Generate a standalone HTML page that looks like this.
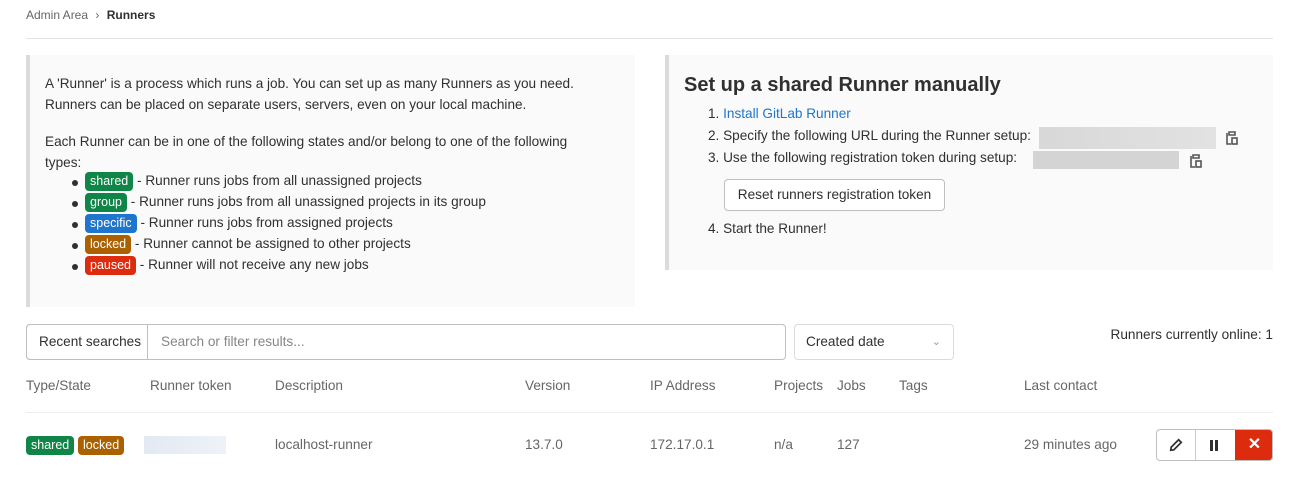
<!DOCTYPE html>
<html><head><style>
*{box-sizing:border-box;margin:0;padding:0}
body{width:1311px;height:492px;background:#fff;font-family:"Liberation Sans",sans-serif;font-size:13.6px;color:#303030;position:relative;overflow:hidden}
.a{position:absolute;white-space:nowrap}
.bd{display:inline-block;color:#fff;border-radius:4px;padding:0 5px;height:19px;line-height:19px;font-size:12.5px}
.g{background:#108548}.b{background:#1f75cb}.o{background:#ab6100}.r{background:#dd2b0e}
.panel{position:absolute;background:#fafafa;border-left:4px solid #dbdbdb}
.li{position:absolute;left:72px;white-space:nowrap}
.li:before{content:"";position:absolute;left:0;top:7px;width:6px;height:6px;border-radius:50%;background:#303030}
.li span.t{position:absolute;left:13px;top:-1px;white-space:nowrap}
.h{color:#666}
.bl{position:absolute;background:linear-gradient(90deg,#d8d8d8,#e2e2e2)}
</style></head><body>
<div class="a" style="left:26px;top:8px;font-size:12px;color:#666">Admin Area <span style="margin:0 4px">›</span> <b style="color:#303030;font-weight:600">Runners</b></div>
<div class="a" style="left:26px;top:38px;width:1247px;height:1px;background:#e5e5e5"></div>

<div class="panel" style="left:26px;top:55px;width:609px;height:252px"></div>
<div class="a" style="left:45px;top:73px;line-height:21px">A 'Runner' is a process which runs a job. You can set up as many Runners as you need.<br>Runners can be placed on separate users, servers, even on your local machine.</div>
<div class="a" style="left:45px;top:131px;line-height:21px">Each Runner can be in one of the following states and/or belong to one of the following<br>types:</div>
<div class="li" style="top:173px"><span class="t"><span class="bd g">shared</span> - Runner runs jobs from all unassigned projects</span></div>
<div class="li" style="top:194px"><span class="t"><span class="bd g">group</span> - Runner runs jobs from all unassigned projects in its group</span></div>
<div class="li" style="top:215px"><span class="t"><span class="bd b">specific</span> - Runner runs jobs from assigned projects</span></div>
<div class="li" style="top:236px"><span class="t"><span class="bd o">locked</span> - Runner cannot be assigned to other projects</span></div>
<div class="li" style="top:257px"><span class="t"><span class="bd r">paused</span> - Runner will not receive any new jobs</span></div>

<div class="panel" style="left:665px;top:55px;width:608px;height:215px"></div>
<div class="a" style="left:684px;top:74px;font-size:20px;font-weight:600">Set up a shared Runner manually</div>
<div class="a" style="left:708px;top:106px">1. <span style="color:#1f75cb">Install GitLab Runner</span></div>
<div class="a" style="left:708px;top:128px">2. Specify the following URL during the Runner setup:</div>
<div class="bl" style="left:1039px;top:127px;width:177px;height:22px"></div>
<svg class="a" style="left:1226px;top:130px" width="12" height="15" viewBox="0 0 12 15"><path d="M3 2h6v3H3z M1 3v11h4" fill="none" stroke="#555" stroke-width="1.6"/><rect x="6" y="8" width="5" height="6" fill="none" stroke="#555" stroke-width="1.6"/></svg>
<div class="a" style="left:708px;top:150px">3. Use the following registration token during setup:</div>
<div class="bl" style="left:1033px;top:151px;width:146px;height:18px;background:#d4d4d4"></div>
<svg class="a" style="left:1190px;top:153px" width="12" height="15" viewBox="0 0 12 15"><path d="M3 2h6v3H3z M1 3v11h4" fill="none" stroke="#555" stroke-width="1.6"/><rect x="6" y="8" width="5" height="6" fill="none" stroke="#555" stroke-width="1.6"/></svg>
<div class="a" style="left:724px;top:179px;width:221px;height:32px;border:1px solid #bfbfbf;border-radius:4px;background:#fff;text-align:center;line-height:30px">Reset runners registration token</div>
<div class="a" style="left:708px;top:221px">4. Start the Runner!</div>

<div class="a" style="left:26px;top:324px;width:760px;height:36px;border:1px solid #bfbfbf;border-radius:4px"></div>
<div class="a" style="left:26px;top:324px;width:122px;height:36px;border:1px solid #bfbfbf;border-radius:4px 0 0 4px;line-height:34px;padding-left:12px">Recent searches</div>
<div class="a" style="left:161px;top:334px;color:#868686">Search or filter results...</div>
<div class="a" style="left:794px;top:324px;width:160px;height:36px;border:1px solid #dbdbdb;border-radius:4px;line-height:34px;padding-left:11px">Created date<span style="position:absolute;right:12px;color:#999;font-size:11px">⌄</span></div>
<div class="a" style="right:38px;top:327px">Runners currently online: 1</div>

<div class="a h" style="left:26px;top:378px">Type/State</div>
<div class="a h" style="left:150px;top:378px">Runner token</div>
<div class="a h" style="left:275px;top:378px">Description</div>
<div class="a h" style="left:525px;top:378px">Version</div>
<div class="a h" style="left:650px;top:378px">IP Address</div>
<div class="a h" style="left:774px;top:378px">Projects</div>
<div class="a h" style="left:837px;top:378px">Jobs</div>
<div class="a h" style="left:899px;top:378px">Tags</div>
<div class="a h" style="left:1024px;top:378px">Last contact</div>
<div class="a" style="left:26px;top:412px;width:1247px;height:1px;background:#eee"></div>

<div class="a" style="left:26px;top:436px"><span class="bd g">shared</span> <span class="bd o">locked</span></div>
<div class="a" style="left:144px;top:436px;width:82px;height:18px;background:linear-gradient(90deg,#e3e9f2,#eef2f8)"></div>
<div class="a h" style="left:275px;top:437px">localhost-runner</div>
<div class="a h" style="left:525px;top:437px">13.7.0</div>
<div class="a h" style="left:650px;top:437px">172.17.0.1</div>
<div class="a h" style="left:774px;top:437px">n/a</div>
<div class="a h" style="left:837px;top:437px">127</div>
<div class="a h" style="left:1024px;top:437px">29 minutes ago</div>
<div class="a" style="left:1156px;top:429px;width:117px;height:32px;border:1px solid #bfbfbf;border-radius:4px;overflow:hidden;background:#fff">
<div style="position:absolute;left:38px;top:0;width:1px;height:32px;background:#ccc"></div>
<svg style="position:absolute;left:12px;top:8px" width="14" height="14" viewBox="0 0 16 16"><path d="M11 2l3 3-8.5 8.5L2 14l.5-3.5z" fill="none" stroke="#303030" stroke-width="2"/></svg>
<div style="position:absolute;left:53px;top:10px;width:3px;height:11px;background:#303030"></div>
<div style="position:absolute;left:58px;top:10px;width:3px;height:11px;background:#303030"></div>
<div style="position:absolute;left:78px;top:-1px;width:39px;height:32px;background:#dd2b0e;color:#fff;text-align:center;line-height:32px;font-size:16px;font-weight:bold">✕</div>
</div>
</body></html>
